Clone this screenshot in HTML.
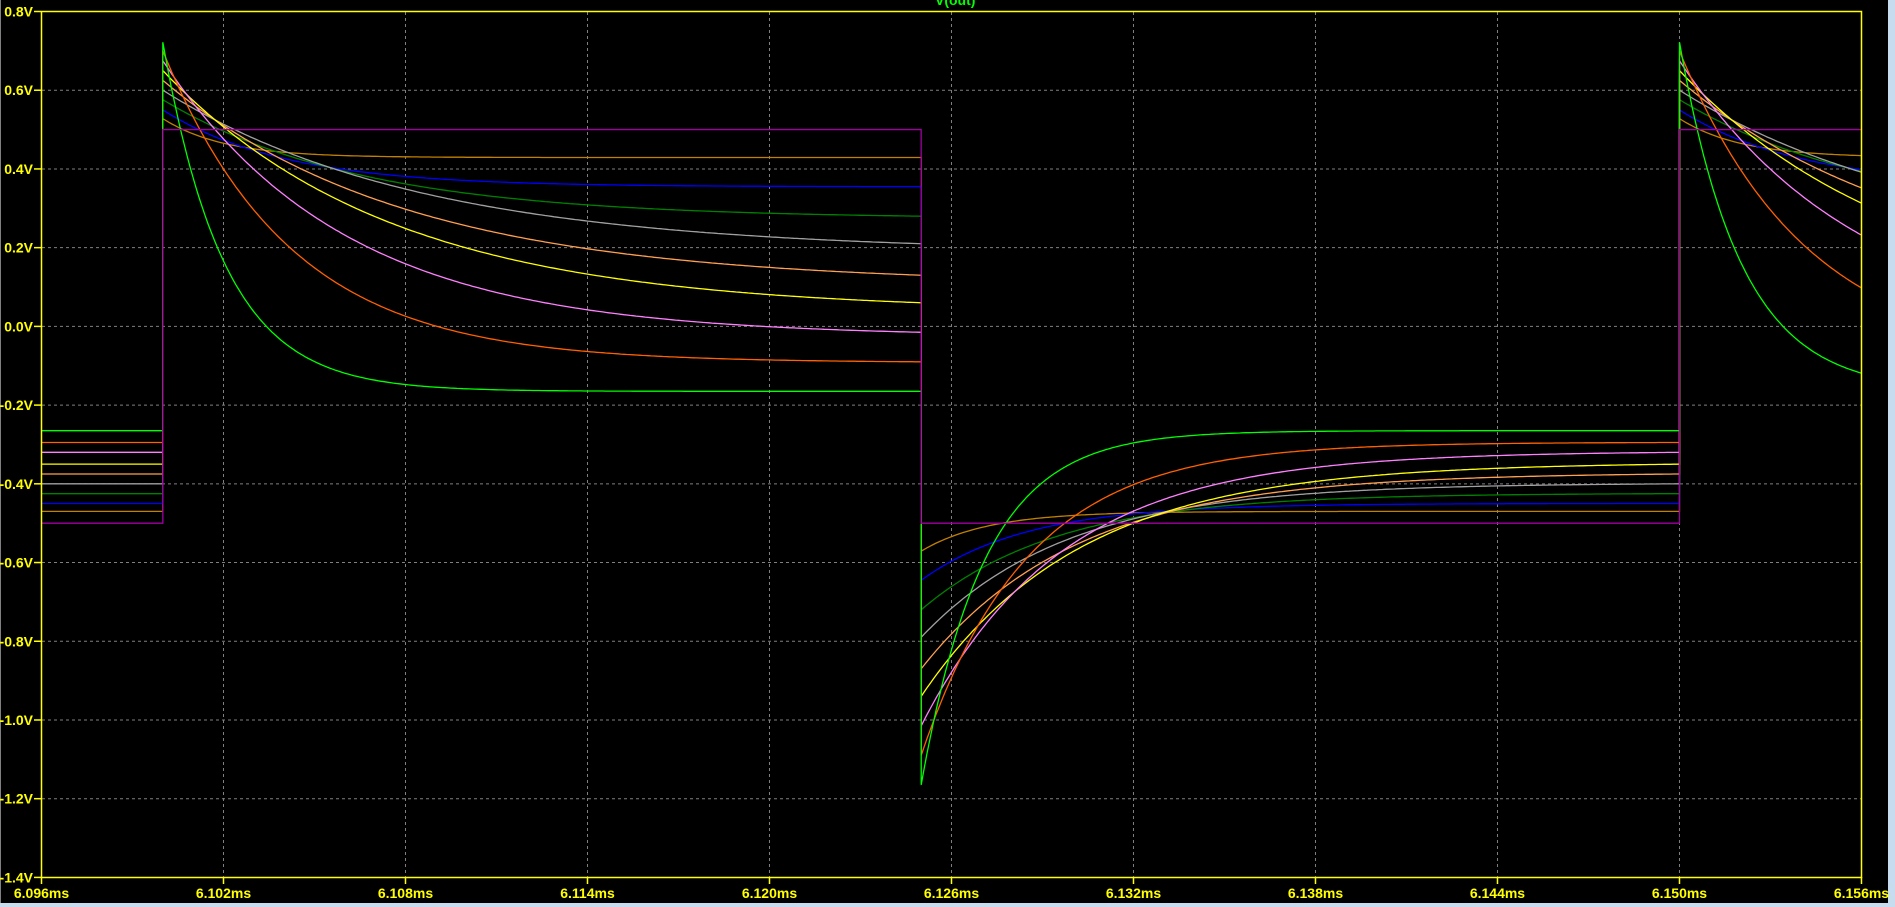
<!DOCTYPE html>
<html><head><meta charset="utf-8"><style>
html,body{margin:0;padding:0;background:#000;width:1895px;height:907px;overflow:hidden}
svg{display:block}
text{font-family:"Liberation Sans",sans-serif;font-weight:bold;font-size:14px;fill:#ffff00}
</style></head><body>
<svg id="s" width="1895" height="907" xmlns="http://www.w3.org/2000/svg">
<rect x="0" y="0" width="1895" height="907" fill="#000"/>
<rect x="0" y="903" width="1895" height="4" fill="#c8dcf0"/>
<rect x="1888" y="0" width="7" height="907" fill="#c8dcf0"/>
<rect x="0" y="0" width="1" height="903" fill="#808080"/>
<g id="grid" stroke="#808080" stroke-width="1" stroke-dasharray="3,3" fill="none"></g>
<g id="curves" fill="none" stroke-width="1.3"></g>
<rect x="41.5" y="11.5" width="1820" height="866" fill="none" stroke="#ffff00" stroke-width="1.5"/>
<g id="ticks" stroke="#ffff00" stroke-width="1.5"></g>
<g id="labels"></g>
<text x="935" y="5" style="fill:#00ff00">V(out)</text>
</svg>
<script>
var NS="http://www.w3.org/2000/svg";
function X(t){return 41.5+t*30.333;}
function Y(v){return 11.5+(0.8-v)*393.6;}
var g=document.getElementById('grid'),tk=document.getElementById('ticks'),lb=document.getElementById('labels');
function el(p,tag,a,txt){var e=document.createElementNS(NS,tag);for(var k in a)e.setAttribute(k,a[k]);if(txt)e.textContent=txt;p.appendChild(e);return e;}
for(var i=0;i<=10;i++){var x=X(i*6);
 if(i>0&&i<10)el(g,'line',{x1:x,y1:12,x2:x,y2:877});
 el(tk,'line',{x1:x,y1:877,x2:x,y2:884});
 el(lb,'text',{x:x,y:898,'text-anchor':'middle'},(6.096+i*0.006).toFixed(3)+'ms');}
for(var j=0;j<=11;j++){var v=0.8-j*0.2,y=Y(v);
 if(j>0&&j<11)el(g,'line',{x1:42,y1:y,x2:1861,y2:y});
 el(tk,'line',{x1:34,y1:y,x2:41,y2:y});
 var s=(Math.abs(v)<1e-9?'0.0':v.toFixed(1))+'V';
 el(lb,'text',{x:33,y:y+5,'text-anchor':'end'},s);}
var C=[
['#c08000',0.528,0.429,2.0,-0.47,2.2],
['#0000ff',0.55,0.355,4.0,-0.45,3.5],
['#008000',0.576,0.28,6.5,-0.425,4.5],
['#a0a0a0',0.60,0.21,8.5,-0.40,4.8],
['#ffa050',0.625,0.13,8.0,-0.375,5.1],
['#ffff00',0.65,0.06,7.5,-0.35,5.2],
['#ff80ff',0.675,-0.015,6.0,-0.32,4.6],
['#ff6000',0.70,-0.09,4.2,-0.295,3.5],
['#00ff00',0.722,-0.165,2.03,-0.265,2.08]];
function seg(s,e,tau,dt,T){var a=Math.exp(-dt/tau),b=Math.exp(-T/tau);return e+(s-e)*(a-b)/(1-b);}
var cg=document.getElementById('curves');
C.forEach(function(c){
 var pk=c[1],he=c[2],tr=c[3],le=c[4],tf=c[5],fs=he-1;
 var d='M'+X(0).toFixed(1)+','+Y(le).toFixed(1)+'L'+X(4).toFixed(1)+','+Y(le).toFixed(1);
 var t;
 for(t=4;t<=29.0001;t+=0.1)d+='L'+X(t).toFixed(1)+','+Y(seg(pk,he,tr,t-4,25)).toFixed(1);
 for(t=29;t<=54.0001;t+=0.1)d+='L'+X(t).toFixed(1)+','+Y(seg(fs,le,tf,t-29,25)).toFixed(1);
 for(t=54;t<=60.0001;t+=0.1)d+='L'+X(t).toFixed(1)+','+Y(seg(pk,he,tr,t-54,25)).toFixed(1);
 el(cg,'path',{d:d,stroke:c[0]});
});
var pd='M'+X(0)+','+Y(-0.5)+'L'+X(4)+','+Y(-0.5)+'L'+X(4)+','+Y(0.5)+'L'+X(29)+','+Y(0.5)+'L'+X(29)+','+Y(-0.5)+'L'+X(54)+','+Y(-0.5)+'L'+X(54)+','+Y(0.5)+'L'+X(60)+','+Y(0.5);
el(cg,'path',{d:pd,stroke:'#a000a0'});
</script>
</body></html>
